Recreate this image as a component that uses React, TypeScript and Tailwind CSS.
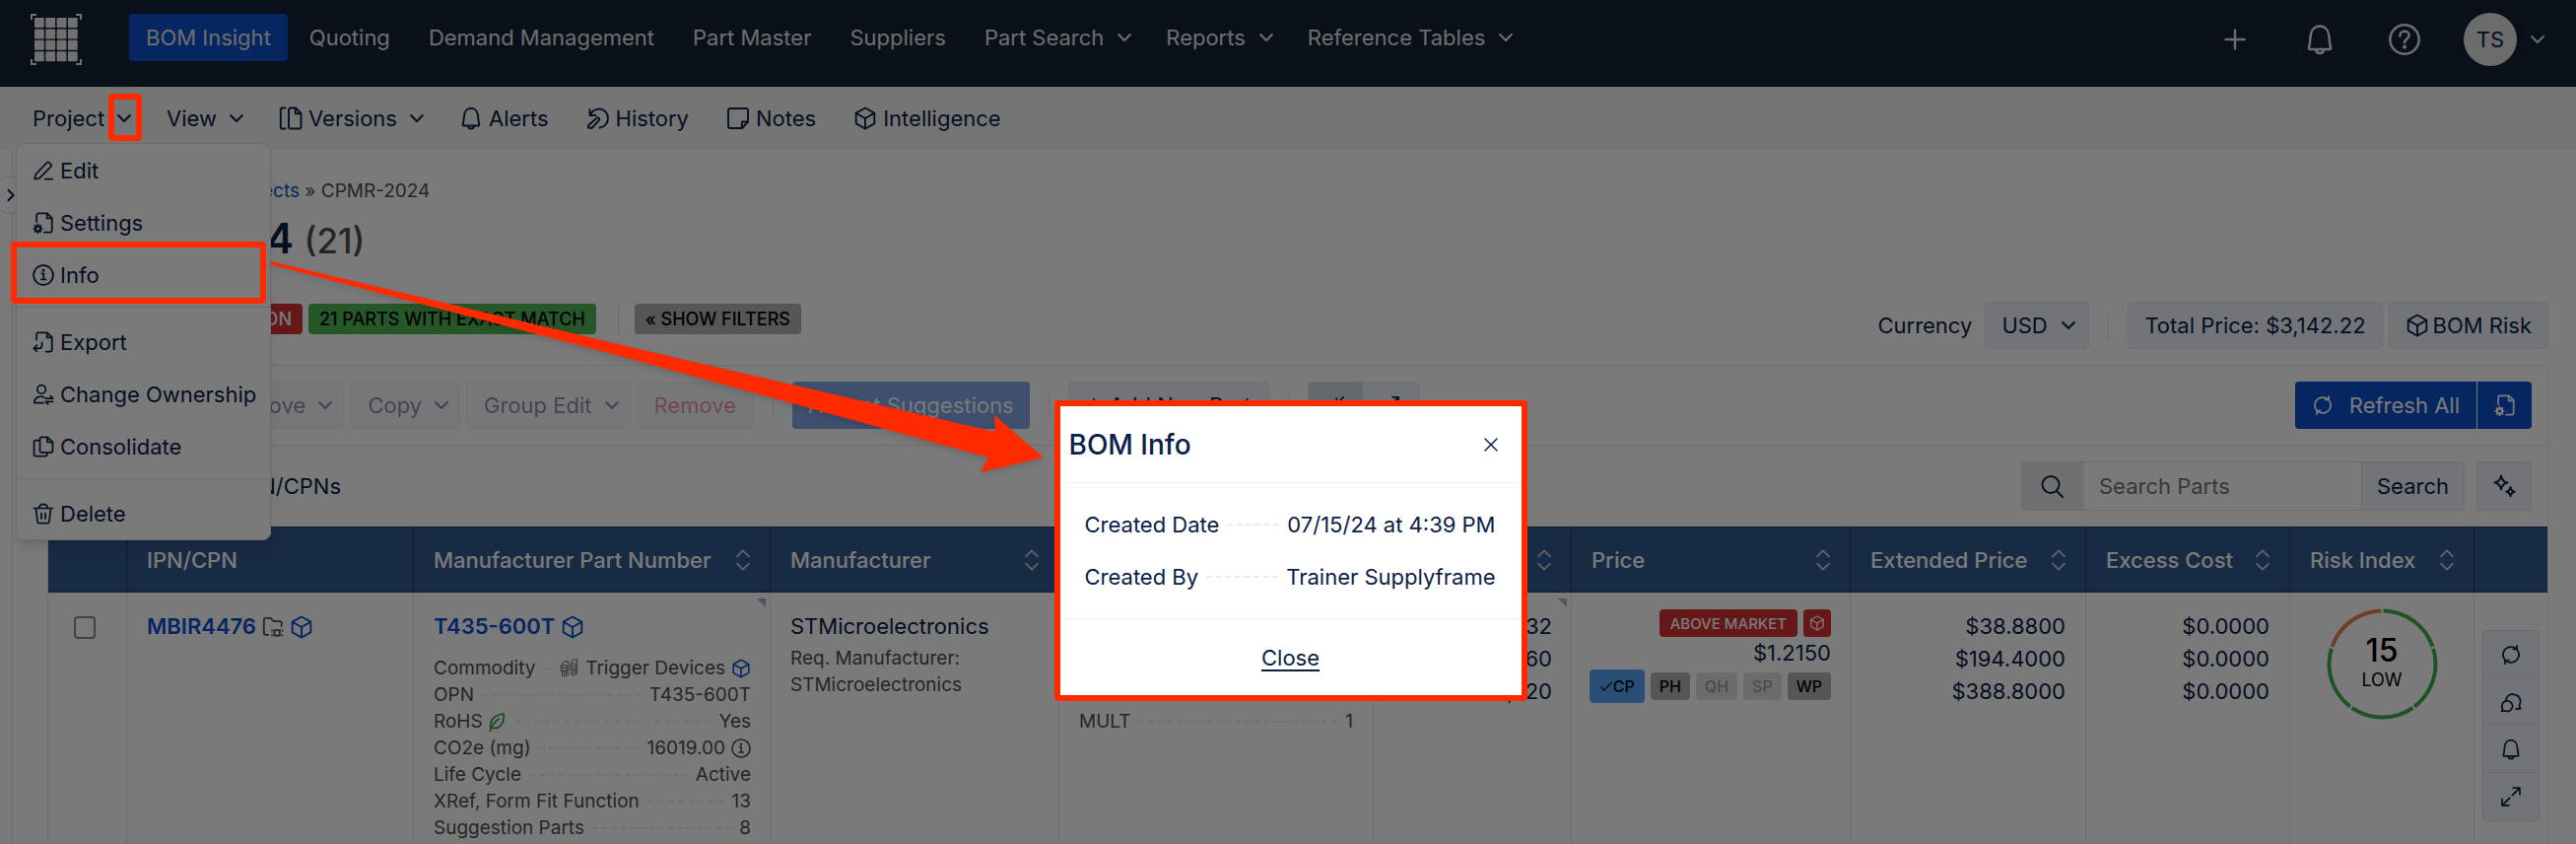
import React from "react";

type IconProps = { name: string; className?: string };

// 24px line icons, drawn with currentColor
const icons: Record<string, React.ReactNode> = {
  chevron: <path d="M5 8.5l7 7 7-7" strokeWidth={2.6} />,
  chevronRight: <path d="M8.5 5l7 7-7 7" strokeWidth={2.6} />,
  versions: (
    <>
      <path d="M6.5 1.5H3.4a1.6 1.6 0 00-1.6 1.6v17.8a1.6 1.6 0 001.6 1.6h3.1" />
      <path d="M17 1.5h-5a2 2 0 00-2 2v17a2 2 0 002 2h8.500a2 2 0 002-2V7z" />
      <path d="M16.800 1.700V7.200h5.500" />
    </>
  ),
  bell: (
    <>
      <path d="M3.600 18.400c.8-2 1-4.400 1.200-7.400C5 5.500 7.700 1.800 12 1.800s7 3.700 7.200 9.200c.2 3 .4 5.400 1.200 7.400 0 .7-.3 1.100-1 1.100H4.600c-.7 0-1-.4-1-1.100z" />
      <path d="M9 19.800c.2 1.700 1.500 2.700 3 2.700s2.800-1 3-2.700" />
    </>
  ),
  history: (
    <>
      <path d="M3.500 3v6h6" />
      <path d="M4 8.500C6 4.500 9.500 2.500 13 2.500c5 0 9 4 9 9.300s-3.600 9.200-8.500 9.700" />
      <path d="M2 21.500v-2.300l8.500-7.500c1.500-1.200 3.600.8 2.400 2.400L5.500 22 2 21.500z" />
    </>
  ),
  note: (
    <>
      <path d="M4 2h16a2 2 0 012 2v11.500L16 22H4a2 2 0 01-2-2V4a2 2 0 012-2z" />
      <path d="M22 15.500h-5a1.200 1.200 0 00-1.200 1.200V22" />
    </>
  ),
  cube: (
    <>
      <path d="M12 1.500l9.300 5.200v10.600L12 22.500l-9.300-5.200V6.700z" />
      <path d="M2.900 6.900L12 12l9.100-5.100M12 12v10.300" />
    </>
  ),
  edit: (
    <>
      <path d="M2.500 21.500l.8-5L15.800 3.300a2 2 0 012.800 0l1.700 1.700a2 2 0 010 2.800L7.500 20.700z" />
      <path d="M14 21.500h8" />
    </>
  ),
  docSettings: (
    <>
      <path d="M4.500 11V3.500a2 2 0 012-2h9.800l5.200 5.200v13.800a2 2 0 01-2 2H13" />
      <path d="M16 1.700v5.300h5.300" />
      <circle cx="6" cy="18.500" r="2.800" strokeWidth={2.400} />
      <path
        d="M6 13.500v2M6 21.500v2M1.200 18.500h2M8.800 18.500h2M2.700 15.200l1.300 1.300M8 20.500l1.300 1.300M2.700 21.800L4 20.500M8 16.500l1.300-1.300"
        strokeWidth={1.800}
      />
    </>
  ),
  info: (
    <>
      <circle cx="12" cy="12" r="10.800" />
      <path d="M10.300 10.200h2v6.500M9.800 16.800h5" />
      <circle cx="12" cy="6.900" r="0.700" fill="currentColor" />
    </>
  ),
  export: (
    <>
      <path d="M4.500 9.500v-6a2 2 0 012-2h9.800l5.200 5.200v13.800a2 2 0 01-2 2H15" />
      <path d="M16 1.700v5.300h5.300" />
      <path d="M10.500 12.500v3a3.500 3.500 0 01-3.500 3.500H1.500M4.700 15.500L1.500 19l3.200 3.300" />
    </>
  ),
  owner: (
    <>
      <circle cx="10" cy="6.500" r="4.600" />
      <path d="M12 21.500H2c0-4.500 2.800-7.300 7-7.300 1.400 0 2.700.3 3.700.9" />
      <path d="M14.500 16.500h8M20 13.800l2.500 2.700M22.500 20h-8M17 22.800L14.500 20" />
    </>
  ),
  copy: (
    <>
      <path d="M16.500 1.500H10a1.800 1.800 0 00-1.800 1.800v13.400A1.800 1.800 0 0010 18.500h10.500a1.800 1.800 0 001.800-1.800V7z" />
      <path d="M16.300 1.700V7H22" />
      <path d="M8 5H3.500a1.800 1.800 0 00-1.800 1.800v14a1.800 1.800 0 001.800 1.800h10.700a1.800 1.800 0 001.800-1.800v-2.300" />
    </>
  ),
  trash: (
    <>
      <path d="M1.500 6h21M7.500 5.800C7.500 3.300 9.300 1.500 12 1.500s4.500 1.800 4.500 4.300" />
      <path d="M3.800 6.200L5.500 21a1.800 1.800 0 001.800 1.500h9.400a1.800 1.800 0 001.800-1.500L20.200 6.200" />
      <path d="M9.800 11.500v6M14.200 11.500v6" />
    </>
  ),
  refresh: (
    <>
      <path d="M4.800 17A8.700 8.700 0 0112 3.300c2.300 0 4.500.9 6 2.400" />
      <path d="M19.200 7A8.700 8.700 0 0112 20.700c-2.300 0-4.500-.9-6-2.400" />
      <path d="M18.600 2v4h-4.200M5.400 22v-4h4.200" />
    </>
  ),
  search: (
    <>
      <circle cx="11" cy="10.500" r="8.500" />
      <path d="M17 17l6 6" />
    </>
  ),
  sparkle: (
    <>
      <path d="M9 1.500c.7 4.500 2.300 6.300 6.500 7-4.200.7-5.800 2.500-6.500 7-.7-4.500-2.300-6.300-6.500-7 4.200-.7 5.800-2.500 6.500-7z" />
      <path d="M18.500 13c.4 2.900 1.400 4.100 4.200 4.700-2.800.6-3.800 1.800-4.200 4.700-.4-2.900-1.400-4.100-4.200-4.700 2.800-.6 3.800-1.800 4.200-4.700z" />
    </>
  ),
  chat: (
    <>
      <path d="M6.500 9a8.300 8.300 0 0116 1.500c0 2.300-.6 4-1.300 5.500l1.300 3.500h-5" />
      <path d="M1.800 22.300l.9-3.200a5.800 5.800 0 112.400 2.500z" />
    </>
  ),
  expand: (
    <>
      <path d="M13.500 10.500l8-8M14.500 2.200h7.300v7.300" />
      <path d="M10.500 13.500l-8 8M9.500 21.800H2.200v-7.300" />
    </>
  ),
  collapse: (
    <>
      <path d="M14 10l8-8M13.500 3.500v7h7" />
      <path d="M10 14l-8 8M10.500 20.500v-7h-7" />
    </>
  ),
  folder: (
    <>
      <path d="M7 20.500H4a2 2 0 01-2-2V4a2 2 0 012-2h5.500l3 3.500H20a1.500 1.500 0 011.500 1.500v4" />
      <path d="M13.500 15.500h6v6h-6zM11 15.800v.4M11 20.800v.4M22.300 15.800v.4M22.300 20.800v.4" />
    </>
  ),
  leaf: (
    <>
      <path d="M5 20C2.500 12 8 3.500 20.500 2.500 22 13.500 15.500 21.500 7 19.500" />
      <path d="M4 23.500C5.500 17.500 9 12.500 14.500 8.500" />
    </>
  ),
  transistor: (
    <>
      <path
        d="M2 8l3-4 5-1v9l-2 3H2zM13 6l3-4 5-1v9l-2 3h-6zM4 8h4v4H4zM15 6h4v4h-4z"
        strokeWidth={1}
      />
      <path
        d="M3 15v6M5.500 15v7M8 15v7M14 13v7M16.500 13v8M19 13v7M10 12v8M21 10v8"
        strokeWidth={1}
      />
    </>
  ),
  plus: <path d="M12 2.500v19M2.500 12h19" strokeWidth={2.4} />,
  close: <path d="M4 4l16 16M20 4L4 20" />,
  check: <path d="M2.500 13l5.500 6L21.500 5.500" strokeWidth={2} />,
  help: (
    <>
      <circle cx="12" cy="12" r="11" />
      <path d="M8.500 9.300c0-2.300 1.500-3.500 3.500-3.500s3.500 1.200 3.500 3.100c0 2.600-3.500 2.900-3.500 5.600" />
      <circle cx="12" cy="17.700" r="0.600" fill="currentColor" />
    </>
  ),
  sort: <path d="M5.500 8L12 1.500 18.500 8M5.500 16l6.500 6.500 6.500-6.500" strokeWidth={2} />,
};

const Icon: React.FC<IconProps> = ({ name, className = "w-6 h-6" }) => (
  <svg
    className={`shrink-0 ${className}`}
    viewBox="0 0 24 24"
    fill="none"
    stroke="currentColor"
    strokeWidth={1.9}
    strokeLinecap="round"
    strokeLinejoin="round"
    aria-hidden="true"
  >
    {icons[name]}
  </svg>
);

const Chevron = () => <Icon name="chevron" className="w-5 h-5" />;

const Logo = () => (
  <svg className="w-[52px] h-[52px]" viewBox="0 0 52 52" aria-hidden="true">
    <g fill="#ededed">
      {[4, 15.3, 26.600, 37.900].map((x) =>
        [4, 15.400, 26.800, 38.200].map((y) => (
          <rect key={`${x}-${y}`} x={x} y={y} width="9.800" height="10" rx="1" />
        ))
      )}
    </g>
    <path
      d="M1 6V1h5M46 1h5v5M51 46v5h-5M6 51H1v-5"
      fill="none"
      stroke="#ededed"
      strokeWidth="2"
    />
  </svg>
);

const navItems = [
  { label: "BOM Insight", active: true },
  { label: "Quoting" },
  { label: "Demand Management" },
  { label: "Part Master" },
  { label: "Suppliers" },
  { label: "Part Search", menu: true },
  { label: "Reports", menu: true },
  { label: "Reference Tables", menu: true },
];

const Navbar: React.FC = () => (
  <header className="flex h-[88px] items-start bg-[#162238] text-[#e4e4e4]">
    <div className="pl-[31px] pt-[14px]">
      <Logo />
    </div>
    <nav className="flex flex-1 gap-[5px] pl-12 pt-[14px]">
      {navItems.map((item) => (
        <a
          key={item.label}
          href="#"
          className={`flex h-12 items-center gap-[11px] rounded pl-[17px] ${
            item.menu ? "pr-[10px]" : "pr-[17px]"
          } ${item.active ? "bg-[#0d50cc]" : ""}`}
        >
          {item.label}
          {item.menu && <Chevron />}
        </a>
      ))}
    </nav>
    <div className="flex items-center pr-[29px] pt-[13px]">
      <button type="button" aria-label="Add" className="mr-[58px]">
        <Icon name="plus" />
      </button>
      <button type="button" aria-label="Notifications" className="mr-[54px]">
        <Icon name="bell" className="w-8 h-8" />
      </button>
      <button type="button" aria-label="Help" className="mr-11">
        <Icon name="help" className="w-8 h-8" />
      </button>
      <button type="button" className="flex items-center gap-[11px]">
        <span className="flex h-[54px] w-[54px] items-center justify-center rounded-full bg-[#e2e2e2] text-[#0b2148]">
          TS
        </span>
        <Chevron />
      </button>
    </div>
  </header>
);

const menuItems = [
  [
    { label: "Edit", icon: "edit" },
    { label: "Settings", icon: "docSettings" },
    { label: "Info", icon: "info" },
  ],
  [
    { label: "Export", icon: "export" },
    { label: "Change Ownership", icon: "owner" },
    { label: "Consolidate", icon: "copy" },
  ],
  [{ label: "Delete", icon: "trash" }],
];

const ProjectMenu: React.FC = () => (
  <div className="absolute left-4 top-[57px] z-10 w-[259px] rounded-lg border border-[#e0e2e8] bg-white shadow-lg">
    {menuItems.map((group, i) => (
      <div
        key={i}
        className={`pb-[6px] last:pb-0 ${i > 0 ? "border-t border-[#dfe2e8] pt-2" : ""}`}
      >
        {group.map((item) => (
          <button
            key={item.label}
            type="button"
            className="flex h-[53px] w-full items-center gap-[6px] whitespace-nowrap pl-4"
          >
            <Icon name={item.icon} className="w-[22px] h-[22px]" />
            {item.label}
          </button>
        ))}
      </div>
    ))}
  </div>
);

const tools = [
  { label: "Project", menu: true },
  { label: "View", menu: true },
  { label: "Versions", icon: "versions", menu: true },
  { label: "Alerts", icon: "bell" },
  { label: "History", icon: "history" },
  { label: "Notes", icon: "note" },
  { label: "Intelligence", icon: "cube" },
];

const SubNav: React.FC = () => (
  <div className="relative flex h-16 items-center gap-1 bg-[#f4f4f4] pl-4">
    {tools.map((tool) => (
      <button
        key={tool.label}
        type="button"
        className={`flex h-12 items-center gap-[6px] pl-[17px] ${
          tool.menu ? "pr-3" : "pr-[17px]"
        }`}
      >
        {tool.icon && <Icon name={tool.icon} />}
        {tool.label}
        {tool.menu && (
          <span className="pl-1">
            <Chevron />
          </span>
        )}
      </button>
    ))}
    <ProjectMenu />
  </div>
);

const secondary =
  "flex h-12 items-center rounded border border-[#e2e5f0] bg-[#f0f2fa]";

const Summary: React.FC = () => (
  <div className="mt-8 flex items-start justify-between">
    <div className="flex items-center gap-[6px] pt-[2px] text-lg font-medium text-black">
      <span className="flex h-[31px] w-[259px] items-center justify-end rounded bg-[#d63034] pr-[11px] text-white">
        NEED ATTENTION
      </span>
      <span className="flex h-[31px] items-center rounded bg-[#4fb657] px-[11px]">
        21 PARTS WITH EXACT MATCH
      </span>
      <span className="ml-4 mr-[10px] h-7 w-px bg-[#e3e5ec]" />
      <button
        type="button"
        className="flex h-[31px] items-center rounded bg-[#b3b3b3] px-[11px]"
      >
        « SHOW FILTERS
      </button>
    </div>
    <div className="flex items-center">
      <label htmlFor="currency" className="mr-[13px]">
        Currency
      </label>
      <div className="relative">
        <select
          id="currency"
          defaultValue="USD"
          className="h-12 w-[106px] appearance-none rounded border border-[#e2e5f0] bg-[#f0f2fa] pl-4"
        >
          <option>USD</option>
        </select>
        <span className="pointer-events-none absolute right-[11px] top-[14px]">
          <Chevron />
        </span>
      </div>
      <span className="mx-[19px] h-7 w-px bg-[#e3e5ec]" />
      <button type="button" className={`${secondary} px-4`}>
        Total Price: $3,142.22
      </button>
      <button type="button" className={`${secondary} ml-[6px] gap-1 px-4`}>
        <Icon name="cube" />
        BOM Risk
      </button>
    </div>
  </div>
);

const Toolbar: React.FC = () => (
  <div className="flex h-[81px] items-center justify-between border-b border-[#e3e5ec] px-4">
    <div className="flex items-center">
      <div className="flex gap-[6px] pl-[170px]">
        {["Move", "Copy", "Group Edit"].map((label) => (
          <button
            key={label}
            type="button"
            disabled
            className={`${secondary} gap-[10px] pl-[17px] pr-2 opacity-50`}
          >
            {label}
            <Chevron />
          </button>
        ))}
        <button
          type="button"
          disabled
          className={`${secondary} px-[17px] text-[#d63034] opacity-50`}
        >
          Remove
        </button>
      </div>
      <span className="mx-[19px] h-7 w-px bg-[#e3e5ec]" />
      <button
        type="button"
        disabled
        className="h-12 rounded bg-[#0d50cc] px-4 text-white opacity-50"
      >
        Accept Suggestions
      </button>
      <span className="mx-[19px] h-7 w-px bg-[#e3e5ec]" />
      <button type="button" className={`${secondary} gap-2 px-[17px]`}>
        <Icon name="plus" className="w-4 h-4" />
        Add New Part
      </button>
      <span className="mx-[19px] h-7 w-px bg-[#e3e5ec]" />
      <div className={`${secondary} overflow-hidden`}>
        <button
          type="button"
          aria-label="Collapse rows"
          className="flex h-full w-[55px] items-center justify-center bg-[#cfdbe2]"
        >
          <Icon name="collapse" className="w-5 h-5" />
        </button>
        <button
          type="button"
          aria-label="Expand rows"
          className="flex h-full w-14 items-center justify-center"
        >
          <Icon name="expand" className="w-5 h-5" />
        </button>
      </div>
    </div>
    <div className="flex h-12 overflow-hidden rounded bg-[#0d50cc] text-white">
      <button type="button" className="flex items-center gap-4 px-[17px]">
        <Icon name="refresh" className="w-[22px] h-[22px]" />
        Refresh All
      </button>
      <button
        type="button"
        aria-label="Refresh settings"
        className="flex w-14 items-center justify-center border-l border-white"
      >
        <Icon name="docSettings" className="w-[22px] h-[22px]" />
      </button>
    </div>
  </div>
);

const SearchRow: React.FC = () => (
  <div className="flex items-center justify-between px-4 py-4">
    <span className="w-[281px] text-right">21 IPN/CPNs</span>
    <div className="flex gap-3">
      <div className="flex h-[50px] overflow-hidden rounded border border-[#e0e2ea]">
        <label
          htmlFor="search"
          aria-label="Search Parts"
          className="flex w-[62px] items-center justify-center border-r border-[#e0e2ea] bg-[#ebebeb]"
        >
          <Icon name="search" />
        </label>
        <input
          id="search"
          type="text"
          placeholder="Search Parts"
          className="w-[282px] px-4 placeholder:text-[#757575]"
        />
        <button
          type="button"
          className="border-l border-[#e0e2ea] bg-[#f0f2fa] px-[15px]"
        >
          Search
        </button>
      </div>
      <button
        type="button"
        aria-label="Suggest"
        className="flex h-[50px] w-14 items-center justify-center rounded border border-[#e0e2ea] bg-[#f0f2fa]"
      >
        <Icon name="sparkle" />
      </button>
    </div>
  </div>
);

const Leader = () => (
  <span className="mx-2 flex-1 border-t-2 border-dashed border-[#ececec]" />
);

const Detail: React.FC<{ label: React.ReactNode; value: React.ReactNode }> = ({
  label,
  value,
}) => (
  <li className="flex h-[27px] items-center">
    <span className="flex items-center gap-1">{label}</span>
    <Leader />
    <span className="flex items-center gap-[6px]">{value}</span>
  </li>
);

const columns = [
  { label: "", width: 80 },
  { label: "IPN/CPN", width: 291 },
  { label: "Manufacturer Part Number", width: 362, sort: true },
  { label: "Manufacturer", width: 293, sort: true },
  { label: "Order Limits", width: 319, sort: true },
  { label: "Quantity", width: 201, sort: true },
  { label: "Price", width: 283, sort: true },
  { label: "Extended Price", width: 239, sort: true },
  { label: "Excess Cost", width: 207, sort: true },
  { label: "Risk Index", width: 187, sort: true },
  { label: "", width: 74 },
];

const Corner = () => (
  <svg className="absolute right-1 top-[6px] h-[9px] w-[9px]" viewBox="0 0 9 9">
    <path d="M0 0h9v9z" fill="#a9b4c4" />
  </svg>
);

const RiskGauge: React.FC = () => (
  <div className="grid h-[113px] w-[113px] place-items-center">
    <svg
      className="col-start-1 row-start-1 h-full w-full -rotate-90"
      viewBox="0 0 113 113"
      fill="none"
      strokeWidth="4"
      aria-hidden="true"
    >
      {["#3fae49", "#3fae49", "#3fae49", "#3fae49", "#e8824a"].map((color, i) => (
        <circle
          key={i}
          cx="56.500"
          cy="56.500"
          r="54"
          stroke={color}
          pathLength={100}
          strokeDasharray="19.400 80.600"
          strokeDashoffset={-(i * 20 + 0.300)}
        />
      ))}
    </svg>
    <div className="col-start-1 row-start-1 text-center text-black">
      <div className="text-[32px] leading-8 font-medium">15</div>
      <div className="text-lg leading-7">LOW</div>
    </div>
  </div>
);

const tag = "flex items-center rounded font-medium";

const PartsTable: React.FC = () => (
  <table className="w-full table-fixed border-separate border-spacing-0 text-left">
    <colgroup>
      {columns.map((col, i) => (
        <col key={i} style={{ width: col.width }} />
      ))}
    </colgroup>
    <thead>
      <tr className="h-[67px] bg-[#345a8e] text-white">
        {columns.map((col, i) => (
          <th
            key={i}
            className="border-y border-r border-y-[#1e3a63] border-r-[#1e3a63] pl-5 pr-4 font-medium last:border-r-0"
          >
            <div className="flex items-center justify-between">
              {col.label}
              {col.sort && (
                <Icon name="sort" className="w-[22px] h-[22px] text-[#c9cfda]" />
              )}
            </div>
          </th>
        ))}
      </tr>
    </thead>
    <tbody>
      <tr className="h-[400px] align-top leading-[33px] [&>td]:border-r [&>td]:border-[#e3e5ec] [&>td:last-child]:border-r-0">
        <td className="pl-[26px] pt-6">
          <input
            type="checkbox"
            aria-label="Select MBIR4476"
            className="block h-[23px] w-[22px] appearance-none rounded border-2 border-[#8b8b8b] bg-white"
          />
        </td>
        <td className="pl-5 pt-[18px]">
          <div className="flex items-center gap-[6px]">
            <a href="#" className="font-semibold text-[#0d50cc]">
              MBIR4476
            </a>
            <Icon name="folder" className="w-[22px] h-[22px] text-[#4a4a4a]" />
            <Icon name="cube" className="w-6 h-6 text-[#0d50cc]" />
          </div>
        </td>
        <td className="relative pl-5 pr-[19px] pt-[18px]">
          <Corner />
          <div className="flex items-center gap-[6px]">
            <a href="#" className="font-semibold text-[#0d50cc]">
              T435-600T
            </a>
            <Icon name="cube" className="w-6 h-6 text-[#0d50cc]" />
          </div>
          <ul className="mt-3 text-[19px] leading-[27px] text-[#4f4f4f]">
            <Detail
              label="Commodity"
              value={
                <>
                  <Icon name="transistor" className="w-5 h-5" />
                  Trigger Devices
                  <Icon name="cube" className="w-5 h-5 text-[#0d50cc]" />
                </>
              }
            />
            <Detail label="OPN" value="T435-600T" />
            <Detail
              label={
                <>
                  RoHS <Icon name="leaf" className="w-5 h-5 text-[#2f8f3a]" />
                </>
              }
              value="Yes"
            />
            <Detail
              label="CO2e (mg)"
              value={
                <>
                  16019.00 <Icon name="info" className="w-5 h-5" />
                </>
              }
            />
            <Detail label="Life Cycle" value="Active" />
            <Detail label="XRef, Form Fit Function" value="13" />
            <Detail label="Suggestion Parts" value="8" />
          </ul>
        </td>
        <td className="px-5 pt-[18px]">
          STMicroelectronics
          <div className="mt-[2px] text-[19px] leading-[27px] text-[#4f4f4f]">
            Req. Manufacturer:
            <br />
            STMicroelectronics
          </div>
        </td>
        <td className="px-5 pt-[90px]">
          <ul className="text-[19px] leading-[27px] text-[#4f4f4f]">
            <Detail label="MIN" value="1" />
            <Detail label="MULT" value="1" />
          </ul>
        </td>
        <td className="relative px-[19px] pt-[18px] text-right">
          <Corner />
          <div>32</div>
          <div>160</div>
          <div>103,720</div>
        </td>
        <td className="px-[19px] pt-[17px]">
          <div className="flex justify-end gap-[6px] text-[15px]">
            <span className={`${tag} h-7 bg-[#d63034] px-[11px] text-white`}>
              ABOVE MARKET
            </span>
            <span className={`${tag} h-7 w-7 justify-center bg-[#d63034] text-white`}>
              <Icon name="cube" className="w-4 h-4" />
            </span>
          </div>
          <div className="text-right">$1.2150</div>
          <div className="flex items-center justify-end gap-[6px] text-base text-black">
            <button type="button" className={`${tag} h-[34px] bg-[#57a5f7] px-[10px]`}>
              <Icon name="check" className="w-[14px] h-[14px]" />
              CP
            </button>
            <button type="button" className={`${tag} h-7 bg-[#b3b3b3] px-[9px]`}>
              PH
            </button>
            <button type="button" disabled className={`${tag} h-7 bg-[#b3b3b3] px-[9px] opacity-40`}>
              QH
            </button>
            <button type="button" disabled className={`${tag} h-7 bg-[#b3b3b3] px-[9px] opacity-40`}>
              SP
            </button>
            <button type="button" className={`${tag} h-7 bg-[#b3b3b3] px-[9px]`}>
              WP
            </button>
          </div>
        </td>
        <td className="px-5 pt-[18px] text-right">
          <div>$38.8800</div>
          <div>$194.4000</div>
          <div>$388.8000</div>
        </td>
        <td className="px-5 pt-[18px] text-right">
          <div>$0.0000</div>
          <div>$0.0000</div>
          <div>$0.0000</div>
        </td>
        <td className="pt-4">
          <div className="flex justify-center">
            <RiskGauge />
          </div>
        </td>
        <td className="px-2 pt-[38px]">
          <div className="flex flex-col divide-y divide-[#dcdfea] rounded border border-[#dcdfea] bg-[#f0f2fa]">
            {[
              ["refresh", "Refresh part"],
              ["chat", "Comments"],
              ["bell", "Alerts"],
              ["expand", "Expand"],
            ].map(([icon, label]) => (
              <button
                key={icon}
                type="button"
                aria-label={label}
                className="flex h-12 items-center justify-center"
              >
                <Icon name={icon} className="w-[22px] h-[22px]" />
              </button>
            ))}
          </div>
        </td>
      </tr>
    </tbody>
  </table>
);

const InfoModal: React.FC = () => (
  <div className="absolute inset-0 z-20 flex items-start justify-center bg-black/52 pl-[5px] pt-[406px]">
    <div
      role="dialog"
      aria-labelledby="bom-info"
      className="w-[480px] rounded border-6 border-[#ff2a00] bg-white"
    >
      <div className="flex h-[78px] items-center justify-between border-b border-[#f0f0f0] pl-[9px] pr-[22px]">
        <h2 id="bom-info" className="text-[28px] font-medium">
          BOM Info
        </h2>
        <button type="button" aria-label="Close dialog">
          <Icon name="close" className="w-[18px] h-[18px]" />
        </button>
      </div>
      <ul className="border-b border-[#f0f0f0] pb-4 pl-[25px] pr-[26px] pt-[15px]">
        {[
          ["Created Date", "07/15/24 at 4:39 PM"],
          ["Created By", "Trainer Supplyframe"],
        ].map(([label, value]) => (
          <li key={label} className="flex h-[53px] items-center">
            {label}
            <Leader />
            {value}
          </li>
        ))}
      </ul>
      <div className="flex h-[77px] items-center justify-center">
        <button type="button" className="underline decoration-2 underline-offset-4">
          Close
        </button>
      </div>
    </div>
  </div>
);

// Red call-outs that lie over the dimmed page
const Callouts: React.FC = () => (
  <div className="pointer-events-none absolute inset-0 z-30">
    <div className="absolute left-[110px] top-[95px] h-12 w-[34px] rounded border-6 border-[#ff2a00]" />
    <div className="absolute left-[11px] top-[245px] h-[63px] w-[259px] rounded border-6 border-[#ff2a00]" />
    <svg
      className="absolute left-0 top-0 h-[856px] w-[1100px] drop-shadow-md"
      viewBox="0 0 1100 856"
      aria-hidden="true"
    >
      <path
        d="M275 265L640 352 1010 438 1009 421 1059 464 995 479 1003 464 640 364 275 268.500z"
        fill="#ff2a00"
      />
    </svg>
  </div>
);

const App: React.FC = () => {
  return (
    <div className="relative h-screen overflow-hidden bg-white font-[Inter,sans-serif] text-[22px] leading-7 text-[#0b2148]">
      <Navbar />
      <SubNav />
      <div className="flex">
        <aside className="relative h-[704px] w-[13px] shrink-0 border-r border-[#dfe2e8]">
          <button
            type="button"
            aria-label="Open sidebar"
            className="absolute left-[-8px] top-[27px] flex h-[38px] w-[38px] items-center justify-center rounded-full border border-[#dfe2e8] bg-white"
          >
            <Icon name="chevronRight" className="w-[18px] h-[18px]" />
          </button>
        </aside>
        <main className="min-w-0 flex-1 pl-[35px] pr-7 pt-7">
          <div className="text-[19px] text-[#4f4f4f]">
            <span className="inline-block w-[256px] text-right">
              <a href="#" className="text-[#0d50cc]">
                Projects
              </a>
            </span>{" "}
            » CPMR-2024
          </div>
          <h1 className="mt-[6px] h-[60px] text-[42px] leading-[56px] font-semibold">
            CPMR-2024{" "}
            <span className="text-[35px] font-medium text-[#4f4f4f]">(21)</span>
          </h1>
          <Summary />
          <section className="mt-4 rounded-lg border border-[#e3e5ec]">
            <Toolbar />
            <SearchRow />
            <PartsTable />
          </section>
        </main>
      </div>
      <InfoModal />
      <Callouts />
    </div>
  );
};

export default App;
